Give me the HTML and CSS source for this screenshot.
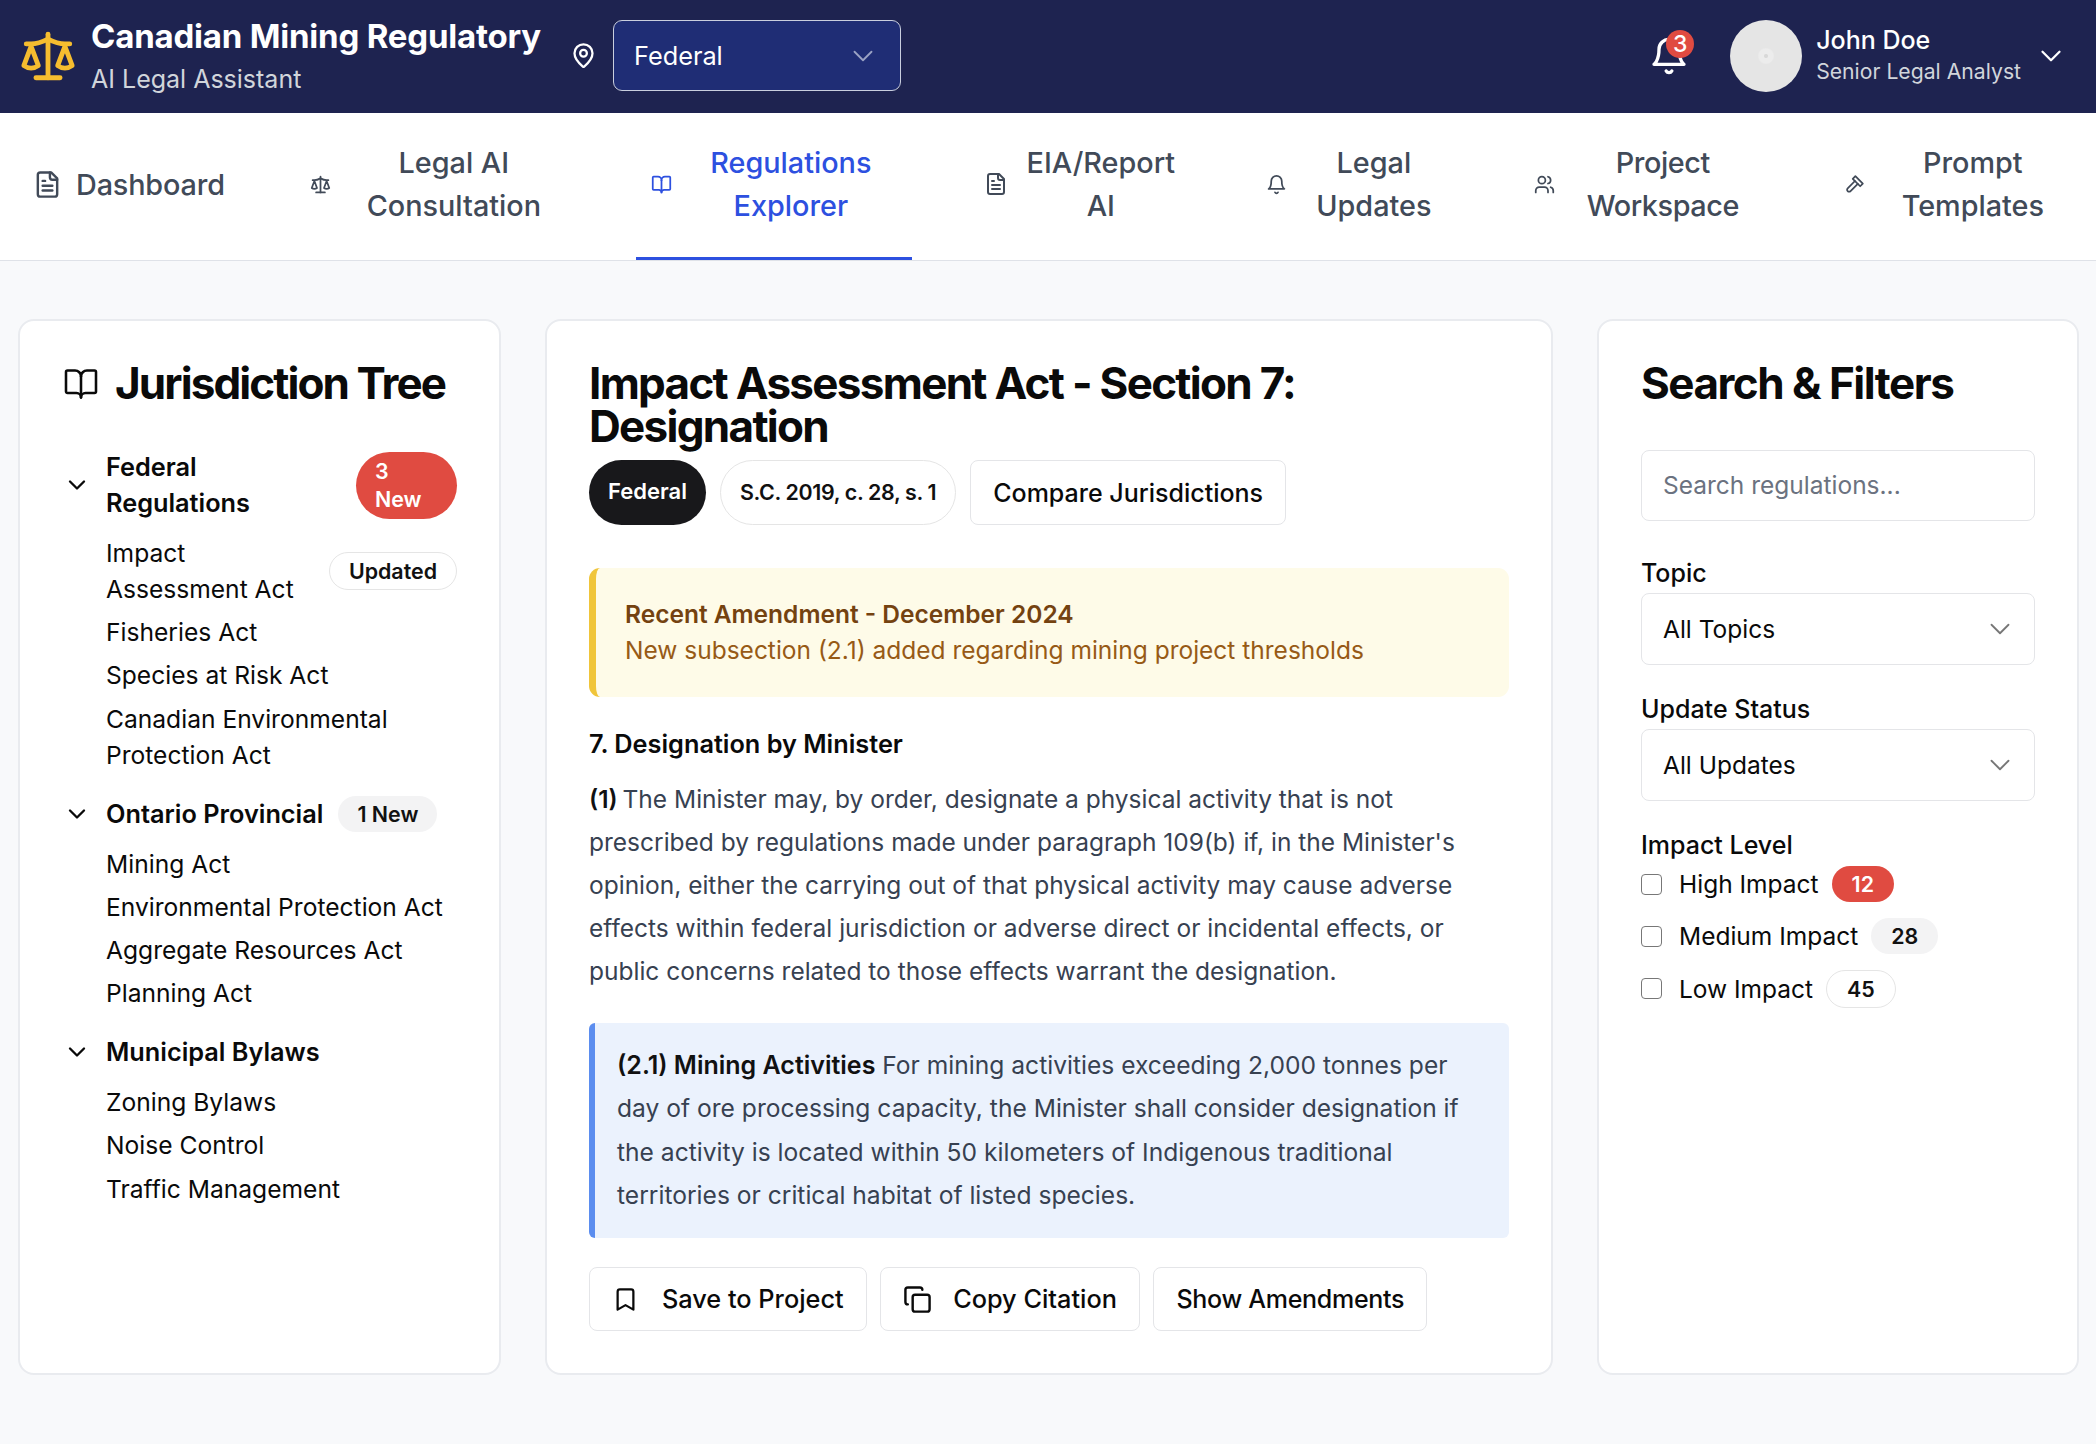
FILE: index.html
```html
<!DOCTYPE html>
<html lang="en">
<head>
<meta charset="utf-8">
<title>Canadian Mining Regulatory</title>
<link rel="stylesheet" href="styles.css">
</head>
<body>
<svg class="sprite" width="0" height="0">
  <defs>
    <symbol id="i-scale" viewBox="0 0 24 24"><path d="m16 16 3-8 3 8c-.87.65-1.92 1-3 1s-2.13-.35-3-1Z"/><path d="m2 16 3-8 3 8c-.87.65-1.92 1-3 1s-2.13-.35-3-1Z"/><path d="M7 21h10"/><path d="M12 3v18"/><path d="M3 7h2c2 0 5-1 7-2 2 1 5 2 7 2h2"/></symbol>
    <symbol id="i-pin" viewBox="0 0 24 24"><path d="M20 10c0 5-5.500 10.200-7.400 11.800a1 1 0 0 1-1.200 0C9.500 20.200 4 15 4 10a8 8 0 0 1 16 0"/><circle cx="12" cy="10" r="3"/></symbol>
    <symbol id="i-chev" viewBox="0 0 24 24"><path d="m6 9 6 6 6-6"/></symbol>
    <symbol id="i-bell" viewBox="0 0 24 24"><path d="M10.300 21a1.940 1.940 0 0 0 3.400 0"/><path d="M6 8a6 6 0 0 1 12 0c0 7 3 9 3 9H3s3-2 3-9"/></symbol>
    <symbol id="i-file" viewBox="0 0 24 24"><path d="M15 2H6a2 2 0 0 0-2 2v16a2 2 0 0 0 2 2h12a2 2 0 0 0 2-2V7Z"/><path d="M14 2v4a2 2 0 0 0 2 2h4"/><path d="M10 9H8"/><path d="M16 13H8"/><path d="M16 17H8"/></symbol>
    <symbol id="i-book" viewBox="0 0 24 24"><path d="M12 7v14"/><path d="M3 18a1 1 0 0 1-1-1V4a1 1 0 0 1 1-1h5a4 4 0 0 1 4 4 4 4 0 0 1 4-4h5a1 1 0 0 1 1 1v13a1 1 0 0 1-1 1h-6a3 3 0 0 0-3 3 3 3 0 0 0-3-3z"/></symbol>
    <symbol id="i-users" viewBox="0 0 24 24"><path d="M16 21v-2a4 4 0 0 0-4-4H6a4 4 0 0 0-4 4v2"/><circle cx="9" cy="7" r="4"/><path d="M22 21v-2a4 4 0 0 0-3-3.870"/><path d="M16 3.130a4 4 0 0 1 0 7.750"/></symbol>
    <symbol id="i-hammer" viewBox="0 0 24 24"><path d="M13 2.500 21.500 11l-3 3-8.500-8.500z"/><path d="M12.500 8 4.200 16.300a2.300 2.300 0 0 0 3.300 3.300L15.800 11.300"/></symbol>
    <symbol id="i-bookmark" viewBox="0 0 24 24"><path d="m19 21-7-4-7 4V5a2 2 0 0 1 2-2h10a2 2 0 0 1 2 2v16z"/></symbol>
    <symbol id="i-copy" viewBox="0 0 24 24"><rect width="14" height="14" x="8" y="8" rx="2"/><path d="M4 16c-1.100 0-2-.9-2-2V4c0-1.100.9-2 2-2h10c1.100 0 2 .9 2 2"/></symbol>
  </defs>
</svg>

<header class="topbar">
  <div class="brand">
    <svg class="icon brand-icon"><use href="#i-scale"/></svg>
    <div class="brand-text">
      <div class="brand-title">Canadian Mining Regulatory</div>
      <div class="brand-sub">AI Legal Assistant</div>
    </div>
  </div>
  <svg class="icon pin"><use href="#i-pin"/></svg>
  <div class="jur-select"><span>Federal</span><svg class="icon chev-jur"><use href="#i-chev"/></svg></div>
  <div class="top-right">
    <div class="bell-wrap">
      <svg class="icon bell"><use href="#i-bell"/></svg>
      <span class="bell-badge">3</span>
    </div>
    <div class="avatar"></div>
    <div class="user">
      <div class="user-name">John Doe</div>
      <div class="user-role">Senior Legal Analyst</div>
    </div>
    <svg class="icon chev-user"><use href="#i-chev"/></svg>
  </div>
</header>

<nav class="nav">
  <a class="nav-item w-dash"><svg class="icon nav-icon nav-icon-lg"><use href="#i-file"/></svg><span>Dashboard</span></a>
  <a class="nav-item w-consult"><svg class="icon nav-icon"><use href="#i-scale"/></svg><span>Legal AI<br>Consultation</span></a>
  <a class="nav-item active w-reg"><svg class="icon nav-icon"><use href="#i-book"/></svg><span>Regulations<br>Explorer</span></a>
  <a class="nav-item w-eia"><svg class="icon nav-icon nav-icon-md"><use href="#i-file"/></svg><span>EIA/Report<br>AI</span></a>
  <a class="nav-item w-upd"><svg class="icon nav-icon"><use href="#i-bell"/></svg><span>Legal<br>Updates</span></a>
  <a class="nav-item w-proj"><svg class="icon nav-icon"><use href="#i-users"/></svg><span>Project<br>Workspace</span></a>
  <a class="nav-item w-prompt"><svg class="icon nav-icon"><use href="#i-hammer"/></svg><span>Prompt<br>Templates</span></a>
</nav>

<main class="layout">
  <aside class="card card-tree">
    <h2 class="card-title tree-title"><svg class="icon tree-icon"><use href="#i-book"/></svg>Jurisdiction Tree</h2>
    <section class="tree-group">
      <div class="tree-head">
        <svg class="icon tree-chev"><use href="#i-chev"/></svg>
        <span class="tree-name tree-name-wrap">Federal Regulations</span>
        <span class="badge badge-red badge-wrap">3 New</span>
      </div>
      <div class="tree-link tree-link-badge"><span class="tree-link-wrap">Impact Assessment Act</span><span class="badge badge-outline">Updated</span></div>
      <div class="tree-link">Fisheries Act</div>
      <div class="tree-link">Species at Risk Act</div>
      <div class="tree-link">Canadian Environmental Protection Act</div>
    </section>
    <section class="tree-group">
      <div class="tree-head">
        <svg class="icon tree-chev"><use href="#i-chev"/></svg>
        <span class="tree-name">Ontario Provincial</span>
        <span class="badge badge-grey">1 New</span>
      </div>
      <div class="tree-link">Mining Act</div>
      <div class="tree-link">Environmental Protection Act</div>
      <div class="tree-link">Aggregate Resources Act</div>
      <div class="tree-link">Planning Act</div>
    </section>
    <section class="tree-group">
      <div class="tree-head">
        <svg class="icon tree-chev"><use href="#i-chev"/></svg>
        <span class="tree-name">Municipal Bylaws</span>
      </div>
      <div class="tree-link">Zoning Bylaws</div>
      <div class="tree-link">Noise Control</div>
      <div class="tree-link">Traffic Management</div>
    </section>
  </aside>

  <article class="card">
    <h1 class="card-title">Impact Assessment Act - Section 7: Designation</h1>
    <div class="meta-row">
      <span class="badge badge-dark badge-meta">Federal</span>
      <span class="badge badge-outline badge-meta badge-cite">S.C. 2019, c. 28, s. 1</span>
      <button class="btn btn-compare">Compare Jurisdictions</button>
    </div>
    <div class="amend">
      <div class="amend-title">Recent Amendment - December 2024</div>
      <div class="amend-text">New subsection (2.1) added regarding mining project thresholds</div>
    </div>
    <h3 class="section-head">7. Designation by Minister</h3>
    <p class="section-body"><strong>(1)</strong> The Minister may, by order, designate a physical activity that is not prescribed by regulations made under paragraph 109(b) if, in the Minister's opinion, either the carrying out of that physical activity may cause adverse effects within federal jurisdiction or adverse direct or incidental effects, or public concerns related to those effects warrant the designation.</p>
    <div class="note"><strong>(2.1) Mining Activities</strong> For mining activities exceeding 2,000 tonnes per day of ore processing capacity, the Minister shall consider designation if the activity is located within 50 kilometers of Indigenous traditional territories or critical habitat of listed species.</div>
    <div class="actions">
      <button class="btn"><svg class="icon btn-icon"><use href="#i-bookmark"/></svg>Save to Project</button>
      <button class="btn"><svg class="icon btn-icon btn-icon-copy"><use href="#i-copy"/></svg>Copy Citation</button>
      <button class="btn btn-show">Show Amendments</button>
    </div>
  </article>

  <aside class="card">
    <h2 class="card-title filters-title">Search &amp; Filters</h2>
    <input class="field search" type="text" placeholder="Search regulations...">
    <label class="filter-label">Topic</label>
    <div class="field select"><span>All Topics</span><svg class="icon select-chev"><use href="#i-chev"/></svg></div>
    <label class="filter-label">Update Status</label>
    <div class="field select"><span>All Updates</span><svg class="icon select-chev"><use href="#i-chev"/></svg></div>
    <label class="filter-label impact-label">Impact Level</label>
    <div class="check-row"><input class="check" type="checkbox"><span>High Impact</span><span class="badge badge-red badge-count">12</span></div>
    <div class="check-row"><input class="check" type="checkbox"><span>Medium Impact</span><span class="badge badge-grey badge-count">28</span></div>
    <div class="check-row"><input class="check" type="checkbox"><span>Low Impact</span><span class="badge badge-outline badge-count">45</span></div>
  </aside>
</main>
</body>
</html>
```

FILE: styles.css
```css
* { box-sizing: border-box; }
html, body { margin: 0; padding: 0; }
body {
  width: 2096px;
  height: 1444px;
  overflow: hidden;
  background: #f8f9fb;
  color: #0a0a0a;
  font-family: Inter, "Liberation Sans", sans-serif;
  font-size: 24.500px;
  line-height: 36px;
}
.sprite { position: absolute; }
.icon { fill: none; stroke: currentColor; stroke-width: 2; stroke-linecap: round; stroke-linejoin: round; flex: none; display: block; }

/* Header */
.topbar { height: 113px; background: #1e2350; color: #fff; display: flex; align-items: center; padding: 0 28px 2px 19px; }
.brand { display: flex; align-items: center; gap: 14px; }
.brand-icon { width: 58px; height: 58px; color: #f6bd2f; }
.brand-title { font-size: 33px; font-weight: 700; line-height: 43px; letter-spacing: -0.2px; }
.brand-sub { font-size: 25px; line-height: 36px; color: #d1d5db; margin-top: 3px; }
.pin { width: 27px; height: 27px; margin-left: 29px; }
.jur-select { width: 288px; height: 71px; margin-left: 16px; background: #1f2d75; border: 1px solid #c9cede; border-radius: 9px; display: flex; align-items: center; justify-content: space-between; padding: 0 22px 0 20px; font-size: 25.300px; }
.chev-jur { width: 34px; height: 34px; color: #9aa2c4; stroke-width: 1.300; margin-right: -2px; }
.top-right { margin-left: auto; display: flex; align-items: center; }
.bell-wrap { position: relative; width: 40px; height: 40px; margin-right: 41px; }
.bell { width: 40px; height: 40px; }
.bell-badge { position: absolute; top: -6px; left: 17px; width: 28px; height: 28px; border-radius: 50%; background: #e04b41; font-size: 23px; line-height: 28px; text-align: center; font-weight: 500; }
.avatar { width: 72px; height: 72px; border-radius: 50%; background: radial-gradient(circle, #d8d8d8 0 1.500px, #ececec 2.500px 7px, #e5e5e5 8.500px); }
.user { margin-left: 14px; padding-bottom: 5px; }
.user-name { font-size: 25px; font-weight: 500; line-height: 36px; }
.user-role { font-size: 21.200px; line-height: 26px; color: #d1d5db; }
.chev-user { width: 34px; height: 34px; margin-left: 13px; stroke-width: 1.600; }

/* Nav */
.nav { height: 148px; background: #fff; border-bottom: 1px solid #dfe2e8; display: flex; gap: 56px; padding-left: 20px; }
.nav-item { display: flex; align-items: center; gap: 13px; padding: 0 15px 2px; font-size: 28.800px; line-height: 43px; font-weight: 500; color: #414a58; text-align: center; height: 147px; flex: none; border-bottom: 3px solid transparent; }
.nav-item span { display: block; flex: none; }
.nav-item.active { color: #2d50e0; border-bottom-color: #2d50e0; }
.nav-icon { width: 21px; height: 21px; }
.nav-icon-lg { width: 29px; height: 29px; }
.nav-icon-md { width: 24px; height: 24px; margin-left: 2px; margin-right: -2px; }
.w-dash { gap: 14px; margin-left: -2px; margin-right: -1px; letter-spacing: -0.150px; }
.w-consult { margin-right: 1px; }
.w-consult span { width: 220px; }
.w-reg { margin-right: -1px; }
.w-reg span { width: 212px; }
.w-eia { margin-right: -3px; }
.w-eia span { width: 164px; }
.w-upd span { width: 148px; }
.w-proj { letter-spacing: -0.400px; }
.w-proj span { width: 190px; }
.w-prompt span { width: 190px; }

/* Layout */
.layout { display: grid; grid-template-columns: 483px 1008px 482px; gap: 44px; padding: 58px 0 0 18px; }
.card { height: 1056px; background: #fff; border: 2px solid #e9ebef; border-radius: 16px; padding: 41px 42px 42px; }
.card-tree { padding-left: 43px; }
.card-title { margin: 0; font-size: 44px; line-height: 43px; font-weight: 700; letter-spacing: -1.700px; }
.tree-title { display: flex; align-items: center; gap: 16px; letter-spacing: -1.900px; }
.filters-title { letter-spacing: -1.500px; }
.tree-icon { width: 36px; height: 36px; stroke-width: 1.700; }

/* Tree */
.tree-group { margin-top: 19.300px; }
.tree-title + .tree-group { margin-top: 44px; }
.tree-head { display: flex; align-items: center; gap: 15px; font-size: 25.300px; font-weight: 600; padding-bottom: 10.500px; }
.tree-chev { width: 28px; height: 28px; }
.tree-name { display: block; }
.tree-name-wrap { width: 190px; flex: none; }
.tree-link { padding: 3.600px 0 3.600px 43px; font-size: 24.600px; }
.tree-link-badge { display: flex; justify-content: space-between; align-items: center; }
.tree-link-wrap { width: 200px; flex: none; }
.badge { display: inline-block; border-radius: 999px; font-size: 21.400px; line-height: 30px; font-weight: 600; padding: 3px 19px; flex: none; }
.badge-red { background: #e04b41; color: #fff; }
.badge-wrap { width: 101px; line-height: 28px; padding: 5.500px 19px; margin-left: auto; }
.badge-outline { background: #fff; border: 1px solid #e5e5e5; color: #111; }
.badge-grey { background: #f3f3f4; color: #111; }
.badge-dark { background: #18181b; color: #fff; }

/* Main */
.meta-row { display: flex; gap: 14px; margin-top: 12px; align-items: stretch; }
.badge-meta { height: 65px; line-height: 63px; padding: 0 19px; font-size: 22px; }
.badge-cite { font-size: 21.400px; letter-spacing: -0.340px; }
.btn { background: #fff; border: 1px solid #e4e5e8; border-radius: 8px; font: inherit; font-size: 25.300px; font-weight: 500; color: #0a0a0a; padding: 0 22px; height: 64px; display: flex; align-items: center; gap: 23px; }
.btn-compare { height: 65px; font-size: 25px; }
.btn-show { font-size: 25px; letter-spacing: -0.280px; }
.btn-icon { width: 27px; height: 27px; }
.btn-icon-copy { width: 29px; height: 29px; margin-right: -2px; }
.amend { margin-top: 43px; background: #fefbe8; border-left: 7px solid #f0c53a; border-radius: 11px; padding: 28px 29px 0; height: 129px; }
.amend-title { font-weight: 600; color: #744210; }
.amend-text { color: #975a16; }
.section-head { margin: 29px 0 0; font-size: 25.300px; font-weight: 600; line-height: 36px; }
.section-body { margin: 15.500px 0 0; color: #374151; line-height: 43.150px; }
.section-body strong { color: #111; font-weight: 600; margin-right: -2px; }
.note { margin-top: 30px; background: #ebf2fd; border-left: 6px solid #5b8def; border-radius: 6px; padding: 21px 22px 0; color: #374151; font-size: 24.600px; line-height: 43.200px; height: 215px; }
.note strong { color: #111; font-weight: 600; font-size: 25px; }
.actions { display: flex; gap: 13.500px; margin-top: 29px; }

/* Filters */
.field { display: flex; align-items: center; width: 100%; height: 72px; border: 1px solid #e4e5e8; border-radius: 8px; background: #fff; padding: 0 22px 0 21px; font: inherit; color: #0a0a0a; }
.search { height: 71px; margin-top: 44.500px; margin-bottom: 34px; }
.search::placeholder { color: #6b7280; }
.select { justify-content: space-between; margin-bottom: 25.500px; }
.select-chev { width: 34px; height: 34px; color: #777; stroke-width: 1.300; margin-right: -4.500px; }
.filter-label { display: block; font-weight: 500; font-size: 25px; line-height: 36px; margin-bottom: 2.500px; }
.impact-label { margin-top: 3px; margin-bottom: 3px; }
.check-row { display: flex; align-items: center; height: 37px; margin-bottom: 15.300px; }
.check { appearance: none; width: 21px; height: 21px; margin: 0 17px 0 0; border: 1.500px solid #777; border-radius: 4px; background: #fff; flex: none; }
.badge-count { margin-left: 13px; font-size: 21.400px; padding: 3px 20px; line-height: 30px; }
```
